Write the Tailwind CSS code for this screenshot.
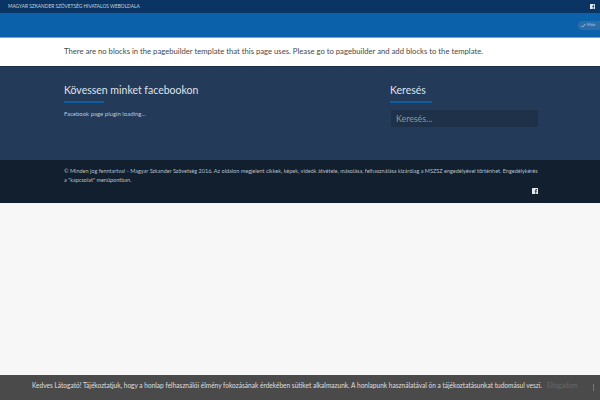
<!DOCTYPE html>
<html lang="en">
<head>
    <meta charset="UTF-8">
    <meta name="viewport" content="width=device-width, initial-scale=1.0">
    <script src="https://cdn.jsdelivr.net/npm/@tailwindcss/browser@4"></script>
    <title>Magyar Szkander Szövetség</title>
</head>
<body class="bg-[#f7f7f7] font-['Lato','Noto_Sans',sans-serif] overflow-hidden h-[400px]">
    <div class="h-[13px] bg-[#0a3463] flex items-center justify-between pl-[8px] pr-[5px]">
        <span class="text-[4.8px] uppercase text-[#d5e0ec] leading-none opacity-90">Magyar Szkander Szövetség Hivatalos Weboldala</span>
        <svg class="w-[5px] h-[5px]" viewBox="0 0 6 6"><rect width="6" height="6" rx="0.6" fill="#dfe8f2"/><path d="M3.4 6V3.6h-.7v-.9h.7V2.1c0-.7.4-1.1 1-1.1h.6v.8h-.4c-.3 0-.4.2-.4.4v.5h.8l-.1.9h-.7V6z" fill="#0a3463"/></svg>
    </div>
    <header class="h-[24px] bg-[#0b62ab] flex justify-end items-center">
        <div class="h-[9px] w-[22px] rounded-l-full bg-[#2a6da8] flex items-center pl-[3px] gap-[1px] text-[4px] text-[#b8cfe3] leading-none overflow-hidden">
            <svg class="w-[5px] h-[5px] shrink-0" viewBox="0 0 5 5"><path d="M.5 3l1 1 3-3" fill="none" stroke="#c5d8e8" stroke-width="0.8"/></svg>
            <span>Male</span>
        </div>
    </header>
    <main class="h-[29px] bg-white border-t-[1px] border-[#6fa8d6] pl-[64px] flex items-center">
        <p class="text-[7.7px] text-[#333] whitespace-nowrap opacity-90">There are no blocks in the pagebuilder template that this page uses. Please go to pagebuilder and add blocks to the template.</p>
    </main>
    <section class="h-[94px] bg-[#233a58] border-t-[1px] border-[#1b2d45] pl-[64px] pr-[62px] flex">
        <div class="w-[326px]">
            <h3 class="mt-[15px] text-[10.5px] leading-[16px] text-[#e6edf3] opacity-95">Kövessen minket facebookon</h3>
            <div class="mt-[3px] h-[2px] w-[40px] bg-[#0f5c9e]"></div>
            <p class="mt-[6px] text-[6px] leading-[9px] text-[#c2cedb] opacity-95">Facebook page plugin loading...</p>
        </div>
        <div class="flex-1">
            <h3 class="mt-[15px] text-[10.5px] leading-[16px] text-[#e6edf3] opacity-95">Keresés</h3>
            <div class="mt-[3px] h-[2px] w-[42px] bg-[#0f5c9e]"></div>
            <div class="mt-[7px] ml-[1px] h-[17px] bg-[#1f3148] flex items-center pl-[5px] text-[8.8px] text-[#8f9fb1]"><span class="opacity-95">Keresés...</span></div>
        </div>
    </section>
    <footer class="h-[43px] bg-[#121f2e] pl-[64px] pr-[62px] pt-[7px]">
        <p class="text-[5.53px] leading-[9px] text-[#bfc8d2] opacity-95">© Minden jog fenntartva! - Magyar Szkander Szövetség 2016. Az oldalon megjelent cikkek, képek, videók átvétele, másolása, felhasználása kizárólag a MSZSZ engedélyével történhet. Engedélykérés a "kapcsolat" menüpontban.</p>
        <div class="flex justify-end mt-[3px]">
            <svg class="w-[6px] h-[6px]" viewBox="0 0 6 6"><rect width="6" height="6" rx="0.6" fill="#e6ebf0"/><path d="M3.4 6V3.6h-.7v-.9h.7V2.1c0-.7.4-1.1 1-1.1h.6v.8h-.4c-.3 0-.4.2-.4.4v.5h.8l-.1.9h-.7V6z" fill="#121f2e"/></svg>
        </div>
    </footer>
    <div class="fixed bottom-0 left-0 right-0 h-[25px] bg-[#4a4a4a] flex items-center pl-[32px] pb-[3px] text-[6.55px] text-[#e2e2e2] whitespace-nowrap">
        <span class="opacity-95">Kedves Látogató! Tájékoztatjuk, hogy a honlap felhasználói élmény fokozásának érdekében sütiket alkalmazunk. A honlapunk használatával ön a tájékoztatásunkat tudomásul veszi.</span>
        <span class="ml-[5px] text-[#6a6a6a] opacity-95">Elfogadom</span>
        <span class="absolute right-[6px] top-[9px] w-[1px] h-[7px] bg-[#777]"></span>
    </div>
</body>
</html>
